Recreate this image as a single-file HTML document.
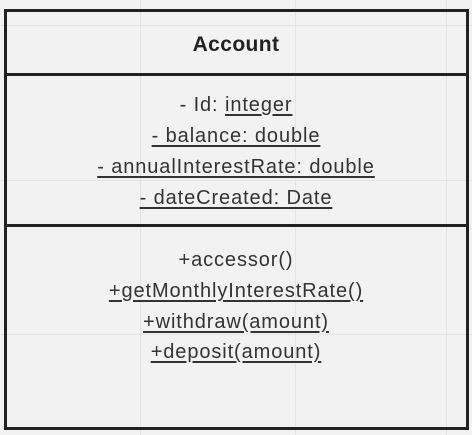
<!DOCTYPE html>
<html><head><style>
body{margin:0;width:472px;height:435px;background:#f2f2f2;position:relative;overflow:hidden;font-family:"Liberation Sans",sans-serif;color:#333}
.g{position:absolute;background:#e4e4e4}
.box{position:absolute;left:4px;top:9px;width:459px;height:415px;border:3px solid #222;}
.hl{position:absolute;left:6px;width:460px;height:3px;background:#222}
.t{position:absolute;left:0;width:472px;text-align:center;font-size:20px;letter-spacing:0.9px;line-height:24px}
u{text-decoration:underline;text-underline-offset:3px}
</style></head><body>
<div class="g" style="left:140px;top:0;width:1px;height:435px"></div>
<div class="g" style="left:295px;top:0;width:1px;height:435px"></div>
<div class="g" style="left:446px;top:0;width:1px;height:435px"></div>
<div class="g" style="left:0;top:25px;width:472px;height:1px"></div>
<div class="g" style="left:0;top:180px;width:472px;height:1px"></div>
<div class="g" style="left:0;top:334px;width:472px;height:1px"></div>
<div class="box"></div>
<div class="hl" style="top:73px"></div>
<div class="hl" style="top:224px"></div>
<div class="t" style="top:33px;font-weight:bold;color:#222;font-size:21px;letter-spacing:0.4px">Account</div>
<div class="t" style="top:93px">- Id: <u>integer</u></div>
<div class="t" style="top:124px"><u>- balance: double</u></div>
<div class="t" style="top:155px"><u>- annualInterestRate: double</u></div>
<div class="t" style="top:186px"><u>- dateCreated: Date</u></div>
<div class="t" style="top:248px">+accessor()</div>
<div class="t" style="top:279px"><u>+getMonthlyInterestRate()</u></div>
<div class="t" style="top:310px"><u>+withdraw(amount)</u></div>
<div class="t" style="top:340px"><u>+deposit(amount)</u></div>
</body></html>
